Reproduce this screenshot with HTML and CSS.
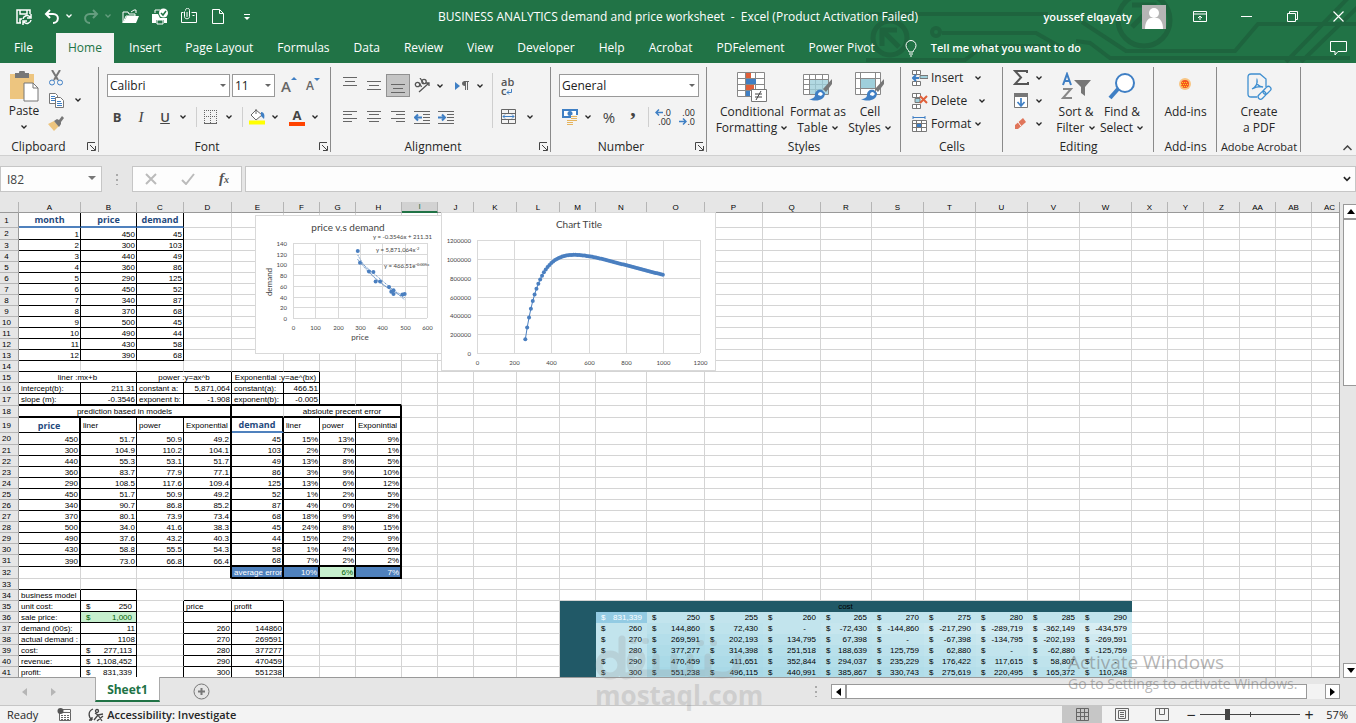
FILE: index.html
```html
<!DOCTYPE html>
<html lang="en">

<head>
  <meta charset="UTF-8">
  <meta name="viewport" content="width=device-width, initial-scale=1.0">
  <title>BUSINESS ANALYTICS demand and price worksheet - Excel</title>
  <link rel="stylesheet" href="styles.css">
</head>

<body>
  <!-- Shared icons -->
  <svg class="defs" width="0" height="0" aria-hidden="true">
    <symbol id="chev" viewBox="0 0 8 8"><path d="M1.500 2.500L4 5l2.500-2.500" fill="none" stroke="currentColor" stroke-width="1.300"/></symbol>
    <symbol id="launch" viewBox="0 0 9 9"><path d="M.5 8V.5H8M3 3l5 5M8.500 4v4.500H4" fill="none" stroke="#444"/></symbol>
    <symbol id="brush" viewBox="0 0 30 30"><path d="M29 7L20 17l3 3 6-8z" fill="#777"/><path d="M19 18c-4-1-7 1-7 5 0 2-2 4-6 4 6 3 16 2 16-6z" fill="#3f7fc4"/><path d="M18 20c-2 0-3 1-3 3l3 1 2-2z" fill="#fff"/></symbol>
  </svg>

  <!-- Green header -->
  <header class="top">
    <svg class="circuit" width="490" height="63" viewBox="866 0 490 63" fill="none" stroke="#1e643e" stroke-width="4" aria-hidden="true">
      <path d="M868 14H1048M942 33h94l28 16M1076 41l14 2 20 15h240M857 60h108l18-14h70M1082 22l44 29h109l23-27h98M1286 62l64-66M1301 62l60-58"/>
      <circle cx="936" cy="32" r="4"/>
      <circle cx="890" cy="38" r="17" stroke-width="5"/>
      <circle cx="1144" cy="20" r="26" stroke-width="5"/>
      <path d="M882 46V30h15M883 31l16 16" stroke-width="5"/>
      <path d="M1132 5h22v22M1152 7l-20 20" stroke-width="5"/>
    </svg>

    <div class="titlebar">
      <div class="quick">
        <button class="qbtn" aria-label="Save"><svg width="18" height="18" viewBox="0 0 18 18" fill="none" stroke="#fff" stroke-width="1.500"><path d="M6 15H2V2h13v4M5 2v4h7V2M5 15v-4h2"/><path d="M8 11a4 4 0 0 1 7-2M16 6v4h-4M16 12a4 4 0 0 1-7 2M8 17v-4h4"/></svg></button>
        <button class="qbtn undo" aria-label="Undo"><svg width="16" height="16" viewBox="0 0 16 16" fill="none" stroke="#fff" stroke-width="2"><path d="M6 1L2 5l4 4M2 5h7c7 0 6 9 0 9"/></svg></button>
        <button class="chev tight" aria-label="Undo list"><svg width="8" height="8"><use href="#chev"/></svg></button>
        <button class="qbtn undo dim" aria-label="Redo"><svg width="16" height="16" viewBox="0 0 16 16" fill="none" stroke="#fff" stroke-width="2"><path d="M10 1l4 4-4 4M14 5H7c-7 0-6 9 0 9"/></svg></button>
        <button class="chev tight dim" aria-label="Redo list"><svg width="8" height="8"><use href="#chev"/></svg></button>
        <button class="qbtn" aria-label="Open"><svg width="18" height="16" viewBox="0 0 18 16"><path d="M1 14V3h5l1 2h6v2H4z" fill="none" stroke="#fff"/><path d="M1 14L5 7h12l-3 7z" fill="#fff"/><path d="M9 3l3-2h2v3" fill="none" stroke="#fff"/></svg></button>
        <button class="qbtn" aria-label="Quick print"><svg width="18" height="18" viewBox="0 0 18 18"><path d="M1 6h6l2 4h7v5h-3v-3H5v3H1z" fill="#fff"/><path d="M4 5V2h5" fill="none" stroke="#fff"/><path d="M6 12h6v4H6z" fill="#217346" stroke="#fff"/><circle cx="12.500" cy="5" r="4.500" fill="#fff"/><path d="M10 5l2 2 3-4" fill="none" stroke="#217346" stroke-width="1.500"/></svg></button>
        <button class="qbtn" aria-label="Email"><svg width="18" height="18" viewBox="0 0 18 18" fill="none" stroke="#fff"><path d="M3.500 4.500h-2v10h15v-10h-5M12.500 7.500h2"/><path d="M4.500 3.500v5c0 3 5 3 5 0v-6c0-3-4-3-4 0M7 4v5"/></svg></button>
        <button class="qbtn" aria-label="New"><svg width="12" height="15" viewBox="0 0 12 15" fill="none" stroke="#fff"><path d="M.5.5h7l4 4v10H.5zM7.500.5v4h4"/></svg></button>
        <button class="qbtn" aria-label="Customize toolbar"><svg width="8" height="8" viewBox="0 0 8 8"><path d="M1 1.500h6" stroke="#fff"/><path d="M1 4h6L4 7z" fill="#fff"/></svg></button>
      </div>
      <h1 class="doc-title">BUSINESS ANALYTICS demand and price worksheet&nbsp; -&nbsp; Excel (Product Activation Failed)</h1>
      <div class="account">
        <span class="user">youssef elqayaty</span>
        <svg class="avatar" width="24" height="24" viewBox="0 0 24 24"><rect width="24" height="24" fill="#b5b5b5"/><circle cx="12" cy="8" r="5" fill="#fff"/><path d="M3 24c0-7 3-11 6-11h6c3 0 6 4 6 11z" fill="#fff"/></svg>
        <button class="win" aria-label="Ribbon display"><svg width="14" height="12" viewBox="0 0 14 12" fill="none" stroke="#fff"><path d="M.5.5h13v10H.5zM.5 3h13M7 9V5M5 7l2-2 2 2"/></svg></button>
        <button class="win" aria-label="Minimize"><svg width="11" height="11"><path d="M0 5.500h11" stroke="#fff"/></svg></button>
        <button class="win" aria-label="Restore"><svg width="11" height="11" viewBox="0 0 11 11" fill="none" stroke="#fff"><path d="M.5 2.500h8v8h-8zM2.500 2V.5h8v8H9"/></svg></button>
        <button class="win" aria-label="Close"><svg width="11" height="11"><path d="M.5.5l10 10M10.500.5l-10 10" stroke="#fff" stroke-width="1.200"/></svg></button>
      </div>
    </div>

    <nav class="tabs">
      <a href="#file" class="file">File</a>
      <a href="#home" class="active">Home</a>
      <a href="#insert">Insert</a>
      <a href="#layout">Page Layout</a>
      <a href="#formulas">Formulas</a>
      <a href="#data">Data</a>
      <a href="#review">Review</a>
      <a href="#view">View</a>
      <a href="#developer">Developer</a>
      <a href="#help">Help</a>
      <a href="#acrobat">Acrobat</a>
      <a href="#pdfelement">PDFelement</a>
      <a href="#pivot">Power Pivot</a>
      <button class="tell"><svg width="12" height="17" viewBox="0 0 12 17" fill="none" stroke="#fff"><path d="M4 12c0-2-3-3-3-6.500a5 5 0 0 1 10 0C11 9 8 10 8 12zM4 14h4M5 16h2"/></svg><span>Tell me what you want to do</span></button>
      <button class="comment" aria-label="Comments"><svg width="17" height="15" viewBox="0 0 17 15" fill="none" stroke="#fff"><path d="M.5.5h16v10H8l-3 3.500v-3.500H.5z"/></svg></button>
    </nav>
  </header>

  <!-- Ribbon -->
  <section class="ribbon">
    <div class="group g-clip">
      <div class="body">
        <button class="big"><svg width="30" height="31" viewBox="0 0 30 31"><path d="M1 3h24v25H1z" fill="#edc57f"/><path d="M6 2h4a3 3 0 0 1 6 0h4v5H6z" fill="#777"/><path d="M15 12h9l5 5v13H15z" fill="#fff" stroke="#777"/><path d="M24 12v5h5" fill="none" stroke="#777"/></svg><span>Paste</span><svg width="8" height="8"><use href="#chev"/></svg></button>
        <div class="stack">
          <button class="ibtn" aria-label="Cut"><svg width="14" height="16" viewBox="0 0 14 16" fill="none"><path d="M3 0l6 10M11 0L5 10" stroke="#777" stroke-width="2"/><circle cx="3" cy="12.500" r="2.500" stroke="#3f7fc4"/><circle cx="11" cy="12.500" r="2.500" stroke="#3f7fc4"/></svg></button>
          <button class="ibtn" aria-label="Copy"><svg width="15" height="15" viewBox="0 0 15 15"><path d="M.5.5h6l2 2v8h-8z" fill="#fff" stroke="#777"/><path d="M6.500 4.500h5l3 3v7h-8z" fill="#fff" stroke="#777"/><path d="M2 3.500h4M2 5.500h4M2 7.500h4M8 8.500h4M8 10.500h5M8 12.500h5" stroke="#3f7fc4"/></svg></button>
          <button class="ibtn" aria-label="Format painter"><svg width="16" height="15" viewBox="0 0 16 15"><path d="M0 8l6-3 5 5-5 5z" fill="#edc57f"/><path d="M6 5l3-2 2 1 3-4 2 2-3 4v2l-2 3z" fill="#777"/></svg></button>
        </div>
        <button class="chev copy-chev" aria-label="Copy options"><svg width="8" height="8"><use href="#chev"/></svg></button>
      </div>
      <h2>Clipboard</h2>
      <button class="launch" aria-label="Clipboard settings"><svg width="9" height="9"><use href="#launch"/></svg></button>
    </div>

    <div class="group g-font">
      <div class="body rows">
        <div class="row">
          <label class="pick font-name"><select aria-label="Font"><option>Calibri</option></select></label>
          <label class="pick font-size"><select aria-label="Font size"><option>11</option></select></label>
          <button class="ibtn glyph grow" aria-label="Increase font size">A<sup class="up"></sup></button>
          <button class="ibtn glyph shrink" aria-label="Decrease font size">A<sup class="down"></sup></button>
        </div>
        <div class="row">
          <button class="ibtn glyph"><b>B</b></button>
          <button class="ibtn glyph"><i>I</i></button>
          <button class="ibtn glyph"><u>U</u></button>
          <button class="chev" aria-label="Underline style"><svg width="8" height="8"><use href="#chev"/></svg></button>
          <span class="sep"></span>
          <button class="ibtn" aria-label="Borders"><svg width="14" height="14" viewBox="0 0 14 14" fill="none" stroke="#666"><path d="M.5 0v13M6.500 0v13M12.500 0v13M0 .5h13M0 6.500h13" stroke-dasharray="1 1"/><path d="M0 13.500h13"/></svg></button>
          <button class="chev" aria-label="Border style"><svg width="8" height="8"><use href="#chev"/></svg></button>
          <span class="sep"></span>
          <button class="ibtn" aria-label="Fill colour"><svg width="17" height="17" viewBox="0 0 17 17"><path d="M2 7l5-5 6 5-6 5z" fill="#fff" stroke="#666"/><path d="M7 6V1" stroke="#666"/><path d="M12 4c3 0 4 3 3 7l-3-3z" fill="#3f7fc4"/><path d="M0 12.500h16v4H0z" fill="#ff0"/></svg></button>
          <button class="chev" aria-label="Fill colours"><svg width="8" height="8"><use href="#chev"/></svg></button>
          <button class="ibtn glyph font-color" aria-label="Font colour"><b>A</b></button>
          <button class="chev" aria-label="Font colours"><svg width="8" height="8"><use href="#chev"/></svg></button>
        </div>
      </div>
      <h2>Font</h2>
      <button class="launch" aria-label="Font settings"><svg width="9" height="9"><use href="#launch"/></svg></button>
    </div>

    <div class="group g-align">
      <div class="body">
        <div class="rows">
          <div class="row">
            <button class="ibtn raise" aria-label="Top align"><svg width="14" height="14" stroke="#666"><path d="M0 3.500h14M2 7.500h10M0 11.500h14"/></svg></button>
            <button class="ibtn" aria-label="Middle align"><svg width="14" height="14" stroke="#666"><path d="M0 2.500h14M2 6.500h10M0 10.500h14"/></svg></button>
            <button class="ibtn pressed" aria-label="Bottom align"><svg width="14" height="14" stroke="#666"><path d="M0 5.500h14M2 9.500h10M0 13.500h14"/></svg></button>
            <button class="ibtn" aria-label="Orientation"><svg width="17" height="15" viewBox="0 0 17 15" fill="none" stroke="#555" stroke-width="1.300"><path d="M5 14L15 5M12 5h3v3"/><circle cx="3.500" cy="6.500" r="2.200"/><path d="M5.500 5l2 4M6 0l4 6"/><circle cx="10" cy="3.500" r="2.200"/></svg></button>
            <button class="chev" aria-label="Orientation options"><svg width="8" height="8"><use href="#chev"/></svg></button>
            <button class="ibtn push" aria-label="Text direction"><svg width="14" height="12" viewBox="0 0 14 12"><path d="M0 2l5 4-5 4z" fill="#3f7fc4"/><path d="M9 1.500h5M10.500 1v9M12.500 1v9" stroke="#666"/><path d="M10 1c-4 0-4 5 0 5z" fill="#666"/></svg></button>
            <button class="chev" aria-label="Direction options"><svg width="8" height="8"><use href="#chev"/></svg></button>
          </div>
          <div class="row">
            <button class="ibtn" aria-label="Align left"><svg width="14" height="13" stroke="#666"><path d="M0 1.500h14M0 4.500h9M0 8.500h14M0 11.500h9"/></svg></button>
            <button class="ibtn" aria-label="Center"><svg width="14" height="13" stroke="#666"><path d="M0 1.500h14M2 4.500h10M0 8.500h14M2 11.500h10"/></svg></button>
            <button class="ibtn" aria-label="Align right"><svg width="14" height="13" stroke="#666"><path d="M0 1.500h14M5 4.500h9M0 8.500h14M5 11.500h9"/></svg></button>
            <button class="ibtn" aria-label="Decrease indent"><svg width="16" height="14" stroke="#666" fill="none"><path d="M0 1.500h16M9 4.500h7M9 7.500h7M9 10.500h7M0 13.500h16"/><path d="M8 7.500H1M4 4.500l-3 3 3 3" stroke="#3f7fc4" stroke-width="2"/></svg></button>
            <button class="ibtn" aria-label="Increase indent"><svg width="16" height="14" stroke="#666" fill="none"><path d="M0 1.500h16M9 4.500h7M9 7.500h7M9 10.500h7M0 13.500h16"/><path d="M0 7.500h7M4 4.500l3 3-3 3" stroke="#3f7fc4" stroke-width="2"/></svg></button>
          </div>
        </div>
        <span class="sep tall"></span>
        <div class="rows">
          <div class="row">
            <button class="ibtn wrap" aria-label="Wrap text"><span>ab</span><span>c<svg width="6" height="6" fill="none" stroke="#3f7fc4"><path d="M5.500 0v3.500H1M3 1.500l-2 2 2 2"/></svg></span></button>
          </div>
          <div class="row">
            <button class="ibtn" aria-label="Merge and center"><svg width="15" height="15" viewBox="0 0 15 15" fill="none" stroke="#666"><path d="M.5.5h14v14H.5zM.5 4.500h14M.5 10.500h14M7.500.5v4M7.500 10.500v4"/><path d="M2 7.500h11M4 5.500l-2 2 2 2M11 5.500l2 2-2 2" stroke="#3f7fc4"/></svg></button>
            <button class="chev push" aria-label="Merge options"><svg width="8" height="8"><use href="#chev"/></svg></button>
          </div>
        </div>
      </div>
      <h2>Alignment</h2>
      <button class="launch" aria-label="Alignment settings"><svg width="9" height="9"><use href="#launch"/></svg></button>
    </div>

    <div class="group g-number">
      <div class="body rows">
        <div class="row">
          <label class="pick format"><select aria-label="Number format"><option>General</option></select></label>
        </div>
        <div class="row">
          <button class="ibtn" aria-label="Accounting format"><svg width="17" height="16" viewBox="0 0 17 16"><path d="M0 0h16v9H0z" fill="#3f7fc4"/><path d="M2 2h12v5H2z" fill="#fff"/><circle cx="8" cy="4.500" r="2.500" fill="#3f7fc4"/><path d="M9 6h7v8h-4v2H5v-6h4z" fill="#f3f3f3"/><path d="M9 7.500h6M9 9.500h6M5 11.500h10M5 13.500h6M5 15.500h6" stroke="#e5b45f"/></svg></button>
          <button class="chev" aria-label="Currency list"><svg width="8" height="8"><use href="#chev"/></svg></button>
          <button class="ibtn percent">%</button>
          <button class="ibtn comma">,</button>
          <span class="sep"></span>
          <button class="ibtn dec" aria-label="Increase decimal"><span><svg width="8" height="7" fill="none" stroke="#3f7fc4" stroke-width="1.500"><path d="M8 3.500H1M4 .5l-3 3 3 3"/></svg>.0</span><span>.00</span></button>
          <button class="ibtn dec" aria-label="Decrease decimal"><span>.00</span><span><svg width="8" height="7" fill="none" stroke="#3f7fc4" stroke-width="1.500"><path d="M0 3.500h7M4 .5l3 3-3 3"/></svg>.0</span></button>
        </div>
      </div>
      <h2>Number</h2>
      <button class="launch" aria-label="Number settings"><svg width="9" height="9"><use href="#launch"/></svg></button>
    </div>

    <div class="group g-styles">
      <div class="body">
        <button class="big"><svg width="30" height="31" viewBox="0 0 30 31"><path d="M.5.5h27v24H.5zM.5 6.500h27M.5 12.500h27M.5 18.500h27M8.500.5v24M18.500.5v24" fill="#fff" stroke="#888"/><path d="M9 1h5v5H9zM9 13h8v5H9z" fill="#e0603a"/><path d="M9 7h10v5H9zM9 19h4v5H9z" fill="#3f7fc4"/><path d="M14.500 17.500h15v12h-15z" fill="#fff" stroke="#777"/><path d="M18 22h7M18 25h7M24 19l-5 9" stroke="#444"/></svg><span>Conditional<br>Formatting <svg width="8" height="8"><use href="#chev"/></svg></span></button>
        <button class="big"><svg width="30" height="31" viewBox="0 0 30 31"><path d="M.5 2.500h25v20H.5zM.5 7.500h25M.5 12.500h25M.5 17.500h25M6.500 2.500v20M12.500 2.500v20M19.500 2.500v20" fill="#fff" stroke="#888"/><path d="M7 8h18v14H7z" fill="#9fcfdb" opacity=".8"/><use href="#brush" width="30" height="30"/></svg><span>Format as<br>Table <svg width="8" height="8"><use href="#chev"/></svg></span></button>
        <button class="big"><svg width="30" height="31" viewBox="0 0 30 31"><path d="M.5.5h25v22H.5zM.5 6.500h25M.5 16.500h25M5.500.5v22M20.500.5v22" fill="#fff" stroke="#888"/><path d="M6 7h14v9H6z" fill="#9fcfdb"/><use href="#brush" width="30" height="30"/></svg><span>Cell<br>Styles <svg width="8" height="8"><use href="#chev"/></svg></span></button>
      </div>
      <h2>Styles</h2>
    </div>

    <div class="group g-cells">
      <div class="body stack">
        <button class="line"><svg width="16" height="16" viewBox="0 0 16 16"><path d="M.5.5h8v4h-8zM.5 11.500h8v4h-8zM4.500.5v4M4.500 11.500v4" fill="#fff" stroke="#777"/><path d="M8 5.500h8v3H8z" fill="#9fcfdb" stroke="#777"/><path d="M7 8H1M4 5L1 8l3 3" fill="none" stroke="#3f7fc4" stroke-width="2"/></svg><span>Insert</span><svg class="far" width="8" height="8"><use href="#chev"/></svg></button>
        <button class="line"><svg width="16" height="16" viewBox="0 0 16 16"><path d="M.5.5h8v4h-8zM.5 11.500h8v4h-8zM4.500.5v4M4.500 11.500v4" fill="#fff" stroke="#777"/><path d="M3 5.500h5v4H3z" fill="#9fcfdb" stroke="#777"/><path d="M8 3l7 7M15 3l-7 7" stroke="#e0603a" stroke-width="2"/></svg><span>Delete</span><svg class="far" width="8" height="8"><use href="#chev"/></svg></button>
        <button class="line"><svg width="16" height="16" viewBox="0 0 16 16"><path d="M1 1.500h12M1 0v3M13 0v3" stroke="#3f7fc4"/><path d="M.5 4.500h14v11H.5zM.5 7.500h14M.5 11.500h14M4.500 4.500v11M9.500 4.500v11" fill="#fff" stroke="#777"/><path d="M5 8h4v3H5z" fill="#3f7fc4"/></svg><span>Format</span><svg width="8" height="8"><use href="#chev"/></svg></button>
      </div>
      <h2>Cells</h2>
    </div>

    <div class="group g-edit">
      <div class="body">
        <div class="stack">
          <button class="line" aria-label="AutoSum"><svg width="16" height="15" viewBox="0 0 16 15"><path d="M14 3V1H2l6 6.500L2 14h13v-2" fill="none" stroke="#555" stroke-width="2"/></svg><svg width="8" height="8"><use href="#chev"/></svg></button>
          <button class="line" aria-label="Fill"><svg width="16" height="15" viewBox="0 0 16 15"><path d="M1.500.5h13v14h-13z" fill="#fff" stroke="#777"/><path d="M1 0h14v4H1z" fill="#777"/><path d="M8 5v8M4.500 9L8 13l3.500-4" fill="none" stroke="#3f7fc4" stroke-width="1.700"/></svg><svg width="8" height="8"><use href="#chev"/></svg></button>
          <button class="line" aria-label="Clear"><svg width="16" height="15" viewBox="0 0 16 15"><path d="M2 9l8-7 3 4-8 7H2z" fill="#e0755a"/><path d="M5 6l3 4" stroke="#fff"/></svg><svg width="8" height="8"><use href="#chev"/></svg></button>
        </div>
        <button class="big"><svg width="30" height="31" viewBox="0 0 30 31"><path d="M2 13L6 2l4 11M4 9h5" fill="none" stroke="#3f7fc4" stroke-width="2"/><path d="M2 17h8L2 26h9" fill="none" stroke="#888" stroke-width="2"/><path d="M13 8h17l-6 7v9l-4-3v-6z" fill="#777"/></svg><span>Sort &amp;<br>Filter <svg width="8" height="8"><use href="#chev"/></svg></span></button>
        <button class="big"><svg width="30" height="31" viewBox="0 0 30 31"><circle cx="18" cy="11" r="9" fill="#fff" stroke="#3f7fc4" stroke-width="2"/><path d="M11 17L3 26" stroke="#3f7fc4" stroke-width="4"/></svg><span>Find &amp;<br>Select <svg width="8" height="8"><use href="#chev"/></svg></span></button>
      </div>
      <h2>Editing</h2>
    </div>

    <div class="group g-addins">
      <div class="body">
        <button class="big"><svg width="30" height="31" viewBox="0 0 30 31"><circle cx="14" cy="12" r="6" fill="#f8c583"/><circle cx="14" cy="12" r="4" fill="#f5541f"/><path d="M11 10.500h6M10 12.500h7M11 14.500h6" stroke="#ffd21e" stroke-dasharray="1 1"/></svg><span>Add-ins</span></button>
      </div>
      <h2>Add-ins</h2>
    </div>

    <div class="group g-adobe">
      <div class="body">
        <button class="big"><svg width="30" height="31" viewBox="0 0 30 31" fill="none" stroke="#3f8fd0" stroke-width="1.300"><path d="M13 25H7c-2 0-3-1-3-3V5c0-2 1-3 3-3h9l6 5v8M8 17c4-2 6-6 5-9-1 4 2 7 6 7-4-1-7 0-11 2z"/><rect x="14" y="21" width="9" height="5" rx="2.500" transform="rotate(-45 18 24)"/><rect x="19" y="16" width="9" height="5" rx="2.500" transform="rotate(-45 23 19)"/></svg><span>Create<br>a PDF</span></button>
      </div>
      <h2>Adobe Acrobat</h2>
    </div>
    <button class="collapse" aria-label="Collapse ribbon"><svg width="9" height="6" fill="none" stroke="#444" stroke-width="1.500"><path d="M.5 5L4.500 1l4 4"/></svg></button>
  </section>

  <!-- Formula bar -->
  <section class="formula-bar">
    <label class="name-box"><input type="text" value="I82" aria-label="Name box"></label>
    <span class="dots"></span>
    <div class="fx">
      <button aria-label="Cancel"><svg width="12" height="12"><path d="M1 1l10 10M11 1L1 11" stroke="#bbb" stroke-width="2"/></svg></button>
      <button aria-label="Enter"><svg width="14" height="12"><path d="M1 7l4 4 8-10" fill="none" stroke="#bbb" stroke-width="2"/></svg></button>
      <button class="fn" aria-label="Insert function"><i>f<small>x</small></i></button>
    </div>
    <label class="formula"><input type="text" aria-label="Formula"><svg width="10" height="10"><use href="#chev"/></svg></label>
  </section>

  <!-- Worksheet -->
  <main class="sheet-area">
    <div class="sheet">
      <table class="grid" id="grid"></table>
      <svg class="chart scatter" id="scatter" width="185" height="137" viewBox="0 0 185 137"></svg>
      <svg class="chart profit" id="profit" width="273" height="157" viewBox="0 0 273 157"></svg>
    </div>
    <div class="vscroll">
      <button class="arrow" aria-label="Scroll up"><svg width="8" height="5"><path d="M0 5h8L4 0z"/></svg></button>
      <span class="thumb"></span>
      <button class="arrow last" aria-label="Scroll down"><svg width="8" height="5"><path d="M0 0h8L4 5z"/></svg></button>
    </div>
  </main>

  <!-- Sheet tabs -->
  <section class="sheet-tabs">
    <button class="step" aria-label="Previous sheet"><svg width="5" height="8"><path d="M5 0v8L0 4z" fill="#b5b5b5"/></svg></button>
    <button class="step" aria-label="Next sheet"><svg width="5" height="8"><path d="M0 0v8l5-4z" fill="#b5b5b5"/></svg></button>
    <a href="#sheet1" class="sheet-tab">Sheet1</a>
    <button class="add" aria-label="New sheet"><svg width="17" height="17" fill="none" stroke="#777"><circle cx="8.500" cy="8.500" r="7.500"/><path d="M8.500 5v7M5 8.500h7" stroke-width="2"/></svg></button>
    <span class="dots"></span>
    <div class="hscroll">
      <button class="arrow" aria-label="Scroll left"><svg width="5" height="8"><path d="M5 0v8L0 4z"/></svg></button>
      <span class="thumb"></span>
      <button class="arrow last" aria-label="Scroll right"><svg width="5" height="8"><path d="M0 0v8l5-4z"/></svg></button>
    </div>
  </section>

  <!-- Status bar -->
  <footer class="status">
    <span class="ready">Ready</span>
    <svg class="macro" width="14" height="13" viewBox="0 0 14 13"><path d="M2.500 4.500h11v8h-11zM5 1.500h8.500v3" fill="#fff" stroke="#666"/><path d="M4 7.500h8M4 9.500h8M4 11.500h8" stroke="#666" stroke-dasharray="2 1"/><circle cx="3.500" cy="3" r="3" fill="#555"/></svg>
    <button class="access"><svg width="16" height="14" viewBox="0 0 16 14" fill="none" stroke="#444" stroke-width="1.300"><path d="M5 1C0 3 0 9 4 12M4 12V9M4 12H1M7 5l3 2 5-1M10 7l-4 5M10 7l4 6M15 8l-6 5"/><circle cx="9" cy="3" r="1.500"/></svg><span>Accessibility: Investigate</span></button>
    <div class="views">
      <button class="view on" aria-label="Normal"><svg width="13" height="13" fill="none" stroke="#666"><path d="M.5.5h12v12H.5zM.5 4.500h12M.5 8.500h12M4.500.5v12M8.500.5v12"/></svg></button>
      <button class="view" aria-label="Page layout"><svg width="14" height="13" fill="none" stroke="#666"><path d="M.5.5h13v12H.5zM3.500 2.500h7v8h-7zM5 4.500h4M5 6.500h4M5 8.500h4"/></svg></button>
      <button class="view" aria-label="Page break"><svg width="14" height="13" fill="none" stroke="#666"><path d="M.5.5h13v12H.5zM4.500.5v6h5v-6"/></svg></button>
    </div>
    <button class="zoom-step">−</button>
    <label class="zoom"><input type="range" min="0" max="100" value="26" aria-label="Zoom"></label>
    <button class="zoom-step">+</button>
    <span class="zoom-value">57%</span>
  </footer>

  <!-- Overlays -->
  <div class="activate">
    <p>Activate Windows</p>
    <p class="small">Go to Settings to activate Windows.</p>
  </div>
  <div class="mostaql">
    <svg width="164" height="46" viewBox="0 0 164 46" fill="none" stroke="#9a9a9a" stroke-width="7" stroke-linecap="round"><circle cx="15" cy="30" r="11"/><path d="M27 4v32c0 8 8 5 14 0 8-8 8-18 0-18s-8 20 2 20h18V22M61 38h18V22M79 38h16V22M95 38h18V22M113 38c22 6 30 0 30-16"/><path d="M38 6h1M50 6h1M105 8h1M118 8h1" stroke-width="6"/></svg>
    <p>mostaql.com</p>
  </div>

  <script src="script.js"></script>
</body>

</html>
```
FILE: styles.css
```css
:root {
  --green: #217346;
  --ribbon: #f3f3f3;
  --bar: #e6e6e6;
  --line: #d4d4d4;
  --blue: #4f81bd;
  --teal: #215967;
}

* {
  box-sizing: border-box;
}

body {
  margin: 0;
  height: 100vh;
  display: flex;
  flex-direction: column;
  overflow: hidden;
  position: relative;
  font-family: 'Open Sans', 'Noto Sans', sans-serif;
  font-size: 12px;
  line-height: 16px;
  color: #262626;
  background: var(--bar);
}

button {
  border: 0;
  padding: 0;
  background: none;
  font: inherit;
  color: inherit;
  display: flex;
  align-items: center;
  justify-content: center;
  flex: none;
}

button svg {
  flex: none;
}

h1, h2, p {
  margin: 0;
  font-size: 12px;
  font-weight: normal;
}

.defs {
  position: absolute;
}

/* Header */
.top {
  background: var(--green);
  color: #fff;
  position: relative;
  flex: none;
}

.circuit {
  position: absolute;
  right: 0;
  top: 0;
}

.titlebar {
  position: relative;
  display: grid;
  grid-template-columns: 1fr auto 1fr;
  align-items: center;
  height: 33px;
}

.quick {
  display: flex;
  gap: 5px;
  padding-left: 12px;
}

.qbtn {
  width: 24px;
  height: 24px;
}

.undo {
  width: 22px;
}

.chev {
  width: 12px;
  height: 22px;
}

.tight {
  margin-left: -5px;
}

.dim {
  opacity: 0.3;
}

.account {
  display: flex;
  align-items: center;
  justify-content: flex-end;
  gap: 10px;
}

.user {
  font-size: 11px;
  font-weight: 600;
}

.avatar {
  margin-right: 6px;
}

.win {
  width: 36px;
  height: 28px;
}

.tabs {
  position: relative;
  display: flex;
  height: 30px;
}

.tabs a {
  color: #fff;
  text-decoration: none;
  padding: 0 12px;
  line-height: 30px;
}

.tabs .file {
  width: 56px;
  padding-left: 14px;
}

.tabs .active {
  background: var(--ribbon);
  color: var(--green);
  margin-right: 3px;
}

.tell {
  gap: 14px;
  margin-left: 18px;
  font-size: 11px;
  font-weight: 600;
}

.comment {
  margin-left: auto;
  width: 36px;
}

/* Ribbon */
.ribbon {
  display: flex;
  flex: none;
  height: 93px;
  position: relative;
  background: var(--ribbon);
  border-bottom: 1px solid #d0d0d0;
}

.group {
  position: relative;
  flex: none;
  display: flex;
  flex-direction: column;
  justify-content: space-between;
}

.group::after {
  content: '';
  position: absolute;
  right: 0;
  top: 4px;
  bottom: 3px;
  border-right: 1px solid #8a8a8a;
}

.group h2 {
  text-align: center;
}

.g-clip { width: 99px; }
.g-font { width: 232px; }
.g-align { width: 220px; }
.g-number { width: 156px; }
.g-styles { width: 194px; }
.g-cells { width: 102px; }
.g-edit { width: 151px; }
.g-addins { width: 63px; }
.g-adobe { width: 84px; }

.g-clip h2 {
  padding-right: 22px;
}

.g-font h2, .g-align h2, .g-number h2 {
  padding-right: 16px;
}

.group.g-adobe h2 {
  font-size: 11px;
}

.launch {
  position: absolute;
  right: 3px;
  bottom: 4px;
}

.body {
  display: flex;
  height: 74px;
}

.rows {
  display: flex;
  flex-direction: column;
  padding-top: 11px;
  gap: 8px;
}

.g-font .body { padding-left: 6px; }
.g-align .body { padding-left: 7px; }
.g-number .body { padding-left: 7px; }
.g-cells .body { padding-left: 11px; }

.row {
  display: flex;
  height: 23px;
  align-items: center;
}

.ibtn {
  width: 24px;
  height: 23px;
}

.raise {
  align-items: flex-start;
}

.push {
  margin-left: 4px;
}

.pressed {
  background: #c5c5c5;
  border: 1px solid #919191;
}

.sep {
  width: 1px;
  height: 20px;
  margin: 0 2px 0 7px;
  background: #cfcfcf;
}

.sep.tall {
  height: 55px;
  margin: 10px 3px 0 6px;
}

.g-number .sep {
  margin: 0 2px 0 3px;
}

.g-number .percent {
  margin-left: 3px;
}

.glyph {
  font-size: 13px;
  color: #444;
}

.glyph i {
  font-family: 'Liberation Serif', serif;
  font-size: 15px;
}

.glyph u {
  font-weight: 600;
}

.grow, .shrink {
  font-size: 15px;
  color: #666;
  font-weight: 600;
}

.grow {
  margin-left: 2px;
}

.shrink {
  font-size: 12px;
}

.up, .down {
  align-self: flex-start;
  border: 3px solid transparent;
}

.up {
  border-bottom-color: #3f7fc4;
}

.down {
  border-top-color: #3f7fc4;
  margin-top: 4px;
}

.font-color {
  width: 16px;
  height: 19px;
  margin: 0 4px 0 8px;
  border-bottom: 4px solid #ff4300;
}

.pick {
  position: relative;
  height: 23px;
}

.pick::after {
  content: '';
  position: absolute;
  right: 4px;
  top: 10px;
  border: 3px solid transparent;
  border-top-color: #666;
}

.pick select {
  appearance: none;
  width: 100%;
  height: 100%;
  border: 1px solid #999;
  border-radius: 0;
  background: #fff;
  padding: 0 2px;
  font: inherit;
  color: #222;
}

.font-name {
  width: 123px;
  margin: 0 2px;
}

.font-size {
  width: 43px;
}

.format {
  width: 140px;
  margin-left: 1px;
}

.wrap {
  flex-direction: column;
  align-items: flex-start;
  padding-left: 5px;
  font-size: 11px;
  font-weight: 600;
  color: #555;
}

.wrap span {
  height: 9px;
  line-height: 9px;
}

.percent {
  font-size: 15px;
  color: #444;
}

.comma {
  font-family: 'Liberation Serif', serif;
  font-size: 22px;
  font-weight: bold;
  line-height: 8px;
  padding-bottom: 16px;
  color: #444;
}

.dec {
  flex-direction: column;
  align-items: flex-end;
  padding-right: 4px;
  font-size: 9px;
  line-height: 9px;
}

.dec span {
  display: flex;
  align-items: center;
}

.big {
  flex-direction: column;
  justify-content: flex-start;
  padding-top: 9px;
}

.big > svg:first-child {
  margin-bottom: 1px;
}

.g-clip .big {
  width: 48px;
  padding-top: 8px;
}

.g-clip .big svg:last-child {
  margin-top: 4px;
}

.stack {
  display: flex;
  flex-direction: column;
  align-items: flex-start;
  padding-top: 3px;
}

.g-clip .stack, .g-clip .stack .ibtn {
  width: 16px;
}

.copy-chev {
  margin: 26px 0 0 8px;
}

.g-styles .body {
  padding-left: 8px;
}

.g-styles .big:nth-child(1) { width: 74px; }
.g-styles .big:nth-child(2) { width: 58px; }
.g-styles .big:nth-child(3) { width: 46px; }

.line {
  height: 23px;
  gap: 3px;
}

.line .far {
  margin-left: 8px;
}

.g-edit .stack {
  width: 50px;
  padding-left: 10px;
}

.g-edit .line {
  gap: 6px;
}

.g-edit .big {
  width: 46px;
}

.g-addins .big, .g-adobe .big {
  width: 100%;
}

.collapse {
  position: absolute;
  right: 4px;
  bottom: 4px;
}

/* Formula bar */
.formula-bar {
  display: flex;
  flex: none;
  height: 46px;
  padding: 10px 0;
}

.name-box {
  position: relative;
  width: 102px;
}

.name-box::after {
  content: '';
  position: absolute;
  right: 6px;
  top: 10px;
  border: 4px solid transparent;
  border-top-color: #777;
}

.formula-bar input {
  width: 100%;
  height: 26px;
  border: 1px solid #c6c6c6;
  background: #fdfdfd;
  padding: 0 6px;
  font: inherit;
  color: #444;
}

.dots {
  align-self: center;
  width: 2px;
  height: 11px;
  margin: 0 14px;
  background: repeating-linear-gradient(#aaa 0 2px, transparent 2px 5px);
}

.fx {
  width: 110px;
  border: 1px solid #c6c6c6;
  background: #fdfdfd;
  display: flex;
  justify-content: space-around;
}

.fn {
  font-family: 'Liberation Serif', serif;
  font-size: 15px;
  font-weight: bold;
  color: #555;
}

.fn small {
  font-size: 10px;
}

.formula {
  flex: 1;
  margin-left: 3px;
  position: relative;
}

.formula svg {
  position: absolute;
  right: 4px;
  top: 8px;
}

/* Worksheet */
.sheet-area {
  flex: 1;
  min-height: 0;
  display: flex;
}

.sheet {
  position: relative;
  flex: 1;
  overflow: hidden;
  background: #fff;
  border-right: 1px solid #999;
  border-bottom: 1px solid #999;
}

.grid {
  table-layout: fixed;
  width: 0;
  border-spacing: 0;
  font-family: 'Liberation Sans', Arial, sans-serif;
  font-size: 8px;
  line-height: 9px;
  color: #000;
}

.grid tr { height: 11px; }
.grid .h12 { height: 12px; }
.grid .h15 { height: 15px; }

.grid th, .grid td {
  padding: 0 2px;
  border: 0 solid var(--line);
  border-width: 0 1px 1px 0;
  overflow: hidden;
  white-space: nowrap;
  vertical-align: bottom;
}

.grid th {
  background: var(--bar);
  font-weight: normal;
  border-color: #b5b5b5;
  vertical-align: middle;
}

.grid thead th {
  border-bottom-color: #999;
}

.grid tbody th {
  padding: 0 5px 0 0;
  border-right-color: #999;
}

.grid thead .current {
  background: #d2d2d2;
  color: var(--green);
  border-bottom: 2px solid var(--green);
}

.grid .n {
  text-align: right;
  padding-right: 1px;
}

.grid .c { text-align: center; }
.grid .mid { vertical-align: middle; }

.grid .cur {
  text-align: right;
  padding: 0 4px 0 5px;
}

.cur span {
  float: left;
}

.grid .dash {
  padding-right: 14px;
}

.grid .box { border-color: #000; }
.grid .rt { border-right: 1px solid #000; }
.grid .bt { border-bottom: 1px solid #000; }
.grid .thick-r { border-right: 2px solid #000; }
.grid .thick-b { border-bottom: 2px solid #000; }

.grid .head {
  font-family: 'Open Sans', sans-serif;
  font-size: 9px;
  line-height: 12px;
  font-weight: bold;
  color: #1f497d;
  text-align: center;
  border-bottom: 2px solid var(--blue);
}

.grid .price-head {
  border-bottom: 1px solid #000;
}

.grid .avg {
  background: var(--blue);
  color: #fff;
}

.grid .good {
  background: #c6efce;
  color: #006100;
}

.grid .teal {
  background: var(--teal);
  border-color: var(--teal);
}

.grid .heat {
  border-color: transparent;
}

.grid .corner {
  background: #93cbe3;
  color: #fff;
}

.chart {
  position: absolute;
  box-sizing: content-box;
  background: #fff;
  border: 1px solid #d9d9d9;
  font-family: Lato, sans-serif;
  font-size: 6px;
  fill: #444;
}

.scatter {
  left: 255px;
  top: 13px;
}

.profit {
  left: 441px;
  top: 10px;
}

.chart .title {
  font-size: 10px;
}

.chart .label {
  font-size: 8px;
}

.vscroll {
  width: 16px;
  display: flex;
  flex-direction: column;
  padding: 2px 0 0 3px;
  background: var(--bar);
}

.arrow {
  width: 15px;
  height: 15px;
  background: #fff;
  border: 1px solid #999;
}

.vscroll .thumb {
  height: 167px;
  width: 15px;
  background: #fff;
  border: 1px solid #999;
}

.vscroll .last {
  margin-top: auto;
}

/* Sheet tabs */
.sheet-tabs {
  display: flex;
  flex: none;
  height: 27px;
}

.step {
  width: 29px;
  padding-left: 20px;
}

.sheet-tab {
  width: 65px;
  height: 25px;
  margin: -1px 33px 0 37px;
  z-index: 1;
  background: #fff;
  border: 1px solid #aaa;
  border-top: 0;
  border-bottom: 2px solid var(--green);
  color: var(--green);
  text-align: center;
  text-decoration: none;
  line-height: 26px;
  font-weight: bold;
}

.sheet-tabs .dots {
  margin-left: auto;
}

.hscroll {
  width: 509px;
  height: 15px;
  margin: 6px 16px 0 0;
  display: flex;
  background: var(--ribbon);
}

.hscroll .thumb {
  width: 461px;
  background: #fff;
  border: 1px solid #999;
}

.hscroll .last {
  margin-left: auto;
}

/* Status bar */
.status {
  display: flex;
  align-items: center;
  flex: none;
  height: 18px;
  background: var(--ribbon);
  border-top: 1px solid #c6c6c6;
  padding: 0 8px 0 7px;
  font-size: 11px;
}

.macro {
  margin: 0 17px 0 19px;
}

.access {
  gap: 3px;
  font-weight: 600;
}

.views {
  display: flex;
  margin-left: auto;
}

.view {
  width: 40px;
  height: 17px;
}

.on {
  background: #c6c6c6;
}

.zoom-step {
  width: 18px;
  font-size: 16px;
}

.zoom {
  width: 100px;
  height: 17px;
  background: linear-gradient(#444, #444) center / 1px 5px no-repeat, linear-gradient(#444, #444) center / 100% 1px no-repeat;
}

.zoom input {
  appearance: none;
  display: block;
  width: 100%;
  height: 17px;
  margin: 0;
  background: none;
}

.zoom input::-webkit-slider-thumb {
  appearance: none;
  width: 5px;
  height: 11px;
  background: #444;
}

.zoom-value {
  width: 30px;
  text-align: right;
}

/* Overlays */
.activate, .mostaql {
  position: absolute;
  pointer-events: none;
  z-index: 5;
  color: rgba(120, 120, 120, 0.55);
}

.activate {
  right: 51px;
  bottom: 29px;
  width: 237px;
  white-space: nowrap;
}

.activate p {
  font-size: 19px;
  line-height: 24px;
}

.activate .small {
  font-size: 14px;
  line-height: 20px;
}

.mostaql {
  left: 595px;
  bottom: 14px;
  opacity: 0.4;
}

.mostaql svg {
  display: block;
  opacity: 0.6;
}

.mostaql p {
  font-size: 26px;
  line-height: 28px;
  font-weight: bold;
}
```
FILE: script.js
```js
// Columns and their widths
const cols = {
  A: 62, B: 56, C: 47, D: 48, E: 52, F: 36, G: 36, H: 46, I: 36, J: 36,
  K: 43, L: 43, M: 36, N: 51, O: 58, P: 58, Q: 58, R: 51, S: 52, T: 52,
  U: 52, V: 52, W: 52, X: 36, Y: 36, Z: 36, AA: 36, AB: 36, AC: 36
};
const names = Object.keys(cols);
const lastRow = 41;
const tall = { 1: 'h15', 2: 'h12', 17: 'h12', 18: 'h12', 19: 'h15', 20: 'h12', 31: 'h12', 32: 'h12' };

const cells = {};

function cell(id) {
  if (!cells[id]) cells[id] = { text: '', cls: [], span: 1 };
  return cells[id];
}

function put(id, text, cls, span) {
  const c = cell(id);
  c.text = text;
  if (cls) c.cls.push(cls);
  if (span) c.span = span;
}

// Writes a block of rows, starting at the given column and row
function fill(col, row, rows, cls) {
  rows.forEach((r, y) => r.forEach((v, x) => {
    put(names[names.indexOf(col) + x] + (row + y), v, cls);
  }));
}

function mark(from, to, top, bottom, cls) {
  for (let x = names.indexOf(from); x <= names.indexOf(to); x++) {
    for (let y = top; y <= bottom; y++) cell(names[x] + y).cls.push(cls);
  }
}

const money = v => '<span>$</span>' + v;

const prices = [450, 300, 440, 360, 290, 450, 340, 370, 500, 490, 430, 390];
const demand = [45, 103, 49, 86, 125, 52, 87, 68, 45, 44, 58, 68];

// Source data
fill('A', 1, [['month', 'price', 'demand']], 'head');
fill('A', 2, prices.map((p, i) => [i + 1, p, demand[i]]), 'n');
mark('A', 'C', 2, 13, 'box');
mark('A', 'C', 1, 1, 'rt');

// Model coefficients
put('A15', 'liner :mx+b', 'c', 2);
put('C15', 'power :y=ax^b', 'c', 2);
put('E15', 'Exponential :y=ae^(bx)', 'c', 2);
fill('A', 16, [['intercept(b):'], ['slope (m):']]);
fill('B', 16, [['211.31'], ['-0.3546']], 'n');
fill('C', 16, [['constant a:'], ['exponent b:']]);
fill('D', 16, [['5,871,064'], ['-1.908']], 'n');
fill('E', 16, [['constant(a):'], ['exponent(b):']]);
fill('F', 16, [['466.51'], ['-0.005']], 'n');
mark('A', 'F', 14, 14, 'bt');
mark('A', 'F', 15, 17, 'box');
mark('A', 'H', 17, 17, 'thick-b');

// Predictions and errors
put('A18', 'prediction based in models', 'c', 4);
put('F18', 'absloute precent error', 'c', 3);
put('A19', 'price', 'head');
put('E19', 'demand', 'head');
fill('B', 19, [['liner', 'power', 'Exponential']], 'mid');
fill('F', 19, [['liner', 'power', 'Exponintial']], 'mid');
fill('A', 20, prices.map(p => [p]), 'n');
fill('B', 20, [
  ['51.7', '50.9', '49.2'], ['104.9', '110.2', '104.1'], ['55.3', '53.1', '51.7'],
  ['83.7', '77.9', '77.1'], ['108.5', '117.6', '109.4'], ['51.7', '50.9', '49.2'],
  ['90.7', '86.8', '85.2'], ['80.1', '73.9', '73.4'], ['34.0', '41.6', '38.3'],
  ['37.6', '43.2', '40.3'], ['58.8', '55.5', '54.3'], ['73.0', '66.8', '66.4']
], 'n');
fill('E', 20, demand.map(d => [d]), 'n');
fill('F', 20, [
  ['15%', '13%', '9%'], ['2%', '7%', '1%'], ['13%', '8%', '5%'], ['3%', '9%', '10%'],
  ['13%', '6%', '12%'], ['1%', '2%', '5%'], ['4%', '0%', '2%'], ['18%', '9%', '8%'],
  ['24%', '8%', '15%'], ['15%', '2%', '9%'], ['1%', '4%', '6%'], ['7%', '2%', '2%']
], 'n');
mark('A', 'D', 19, 19, 'box');
mark('F', 'H', 19, 19, 'box');
mark('A', 'H', 20, 31, 'box');
mark('A', 'A', 19, 19, 'price-head');
fill('E', 32, [['average error']], 'avg');
fill('F', 32, [['10%', '6%', '7%']], 'n');
mark('F', 'F', 32, 32, 'avg');
mark('G', 'G', 32, 32, 'good');
mark('H', 'H', 32, 32, 'avg');
mark('A', 'H', 18, 18, 'thick-b');
mark('E', 'H', 31, 32, 'thick-b');
mark('A', 'A', 18, 31, 'thick-r');
mark('D', 'E', 19, 32, 'thick-r');
mark('F', 'F', 18, 18, 'thick-r');
mark('F', 'G', 32, 32, 'thick-r');
mark('H', 'H', 19, 32, 'thick-r');

// Business model
fill('A', 34, [['business model'], ['unit cost:'], ['sale price:'], ['demand (00s):'],
  ['actual demand :'], ['cost:'], ['revenue:'], ['profit:']]);
fill('B', 35, [[money('250')], [money('1,000')]], 'cur');
fill('B', 37, [['11'], ['1108']], 'n');
fill('B', 39, [[money('277,113')], [money('1,108,452')], [money('831,339')]], 'cur');
mark('A', 'B', 33, 33, 'bt');
mark('A', 'B', 34, 41, 'box');
mark('B', 'B', 36, 36, 'good');

fill('D', 35, [['price', 'profit']]);
fill('D', 37, [[260, 144860], [270, 269591], [280, 377277], [290, 470459], [300, 551238]], 'n');
mark('D', 'E', 34, 34, 'bt');
mark('C', 'C', 35, 41, 'rt');
mark('D', 'E', 35, 41, 'box');

// Profit by cost and price
put('M35', 'cost', 'c', 11);
mark('M', 'M', 35, 41, 'teal');
const costs = [250, 255, 260, 265, 270, 275, 280, 285, 290];
const profits = [
  [260, 144860, 72430, 0, -72430, -144860, -217290, -289719, -362149, -434579],
  [270, 269591, 202193, 134795, 67398, 0, -67398, -134795, -202193, -269591],
  [280, 377277, 314398, 251518, 188639, 125759, 62880, 0, -62880, -125759],
  [290, 470459, 411651, 352844, 294037, 235229, 176422, 117615, 58807, 0],
  [300, 551238, 496115, 440991, 385867, 330743, 275619, 220495, 165372, 110248]
];
fill('N', 36, [['831,339', ...costs].map(money)], 'cur');
mark('N', 'W', 36, 41, 'heat');
mark('N', 'N', 36, 36, 'corner');
profits.forEach((r, y) => r.forEach((v, x) => {
  const id = names[13 + x] + (37 + y);
  put(id, money(v === 0 ? '-' : v.toLocaleString('en-US')), 'cur');
  if (v === 0) cell(id).cls.push('dash');
}));

// Light to strong blue, by value
function heatColor(value) {
  const t = Math.max(0, Math.min(1, (value + 434579) / 985817));
  return `rgb(${Math.round(216 - 50 * t)}, ${Math.round(238 - 22 * t)}, ${Math.round(243 - 13 * t)})`;
}

function heatStyle(x, y) {
  if (x < 13 || x > 22 || y < 36 || (x === 13 && y === 36)) return '';
  const v = y === 36 || x === 13 ? 0 : profits[y - 37][x - 13];
  return ` style="background:${heatColor(v)}"`;
}

function drawGrid() {
  let html = '<colgroup><col style="width:19px">';
  names.forEach(n => { html += `<col style="width:${cols[n]}px">`; });
  html += '</colgroup><thead><tr><th></th>';
  names.forEach(n => { html += `<th scope="col"${n === 'I' ? ' class="current"' : ''}>${n}</th>`; });
  html += '</tr></thead><tbody>';
  for (let y = 1; y <= lastRow; y++) {
    html += `<tr class="${tall[y] || ''}"><th scope="row">${y}</th>`;
    for (let x = 0; x < names.length; x++) {
      const c = cells[names[x] + y] || { text: '', cls: [], span: 1 };
      html += `<td class="${c.cls.join(' ')}" colspan="${c.span}"${heatStyle(x, y)}>${c.text}</td>`;
      x += c.span - 1;
    }
    html += '</tr>';
  }
  document.getElementById('grid').innerHTML = html + '</tbody>';
}

// Plot frame with grid lines and axis numbers
function axes(o) {
  let s = '';
  const w = o.right - o.left;
  const h = o.bottom - o.top;
  for (let v = 0; v <= o.maxX; v += o.stepX) {
    const x = Math.round(o.left + w * v / o.maxX) + 0.5;
    s += `<path d="M${x} ${o.top}V${o.bottom}" stroke="#d9d9d9"/><text x="${x}" y="${o.bottom + 12}" text-anchor="middle">${v}</text>`;
  }
  for (let v = 0; v <= o.maxY; v += o.stepY) {
    const y = Math.round(o.bottom - h * v / o.maxY) + 0.5;
    s += `<path d="M${o.left} ${y}H${o.right}" stroke="#d9d9d9"/><text x="${o.left - 6}" y="${y + 2}" text-anchor="end">${v}</text>`;
  }
  return s;
}

function point(o, x, y) {
  return [o.left + (o.right - o.left) * x / o.maxX, o.bottom - (o.bottom - o.top) * y / o.maxY];
}

function trend(o, fn) {
  const pts = [];
  for (let x = 290; x <= 500; x += 10) pts.push(point(o, x, fn(x)).join(' '));
  return `<polyline points="${pts.join(' ')}" fill="none" stroke="#4f81bd" stroke-dasharray="1 1"/>`;
}

function drawScatter() {
  const o = { left: 37, right: 171, top: 27, bottom: 102, maxX: 600, stepX: 100, maxY: 140, stepY: 20 };
  let s = axes(o);
  s += trend(o, x => 211.31 - 0.3546 * x);
  s += trend(o, x => 5871064 * Math.pow(x, -1.908));
  s += trend(o, x => 466.51 * Math.exp(-0.005 * x));
  prices.forEach((p, i) => {
    const [x, y] = point(o, p, demand[i]);
    s += `<circle cx="${x}" cy="${y}" r="2" fill="#4a7fc0"/>`;
  });
  s += '<text class="title" x="92" y="15" text-anchor="middle">price v.s demand</text>';
  s += '<text x="117" y="23">y = -0.3546x + 211.31</text>';
  s += '<text x="120" y="36">y = 5,871,064x<tspan dy="-2" font-size="4">-2</tspan></text>';
  s += '<text x="128" y="52">y = 466.51e<tspan dy="-2" font-size="4">-0.005x</tspan></text>';
  s += '<text class="label" x="104" y="124" text-anchor="middle">price</text>';
  s += '<text class="label" transform="translate(16 66) rotate(-90)" text-anchor="middle">demand</text>';
  document.getElementById('scatter').innerHTML = s;
}

function drawProfit() {
  const o = { left: 35, right: 258, top: 27, bottom: 140, maxX: 1200, stepX: 200, maxY: 1200000, stepY: 200000 };
  let s = axes(o);
  let dots = '';
  const pts = [];
  for (let p = 260; p <= 1000; p += 10) {
    const [x, y] = point(o, p, (p - 250) * 587106400 * Math.pow(p, -1.908));
    pts.push(x + ' ' + y);
    dots += `<circle cx="${x}" cy="${y}" r="2" fill="#4a7fc0"/>`;
  }
  s += `<polyline points="${pts.join(' ')}" fill="none" stroke="#4a7fc0"/>` + dots;
  s += '<text class="title" x="137" y="15" text-anchor="middle">Chart Title</text>';
  document.getElementById('profit').innerHTML = s;
}

drawGrid();
drawScatter();
drawProfit();
```
